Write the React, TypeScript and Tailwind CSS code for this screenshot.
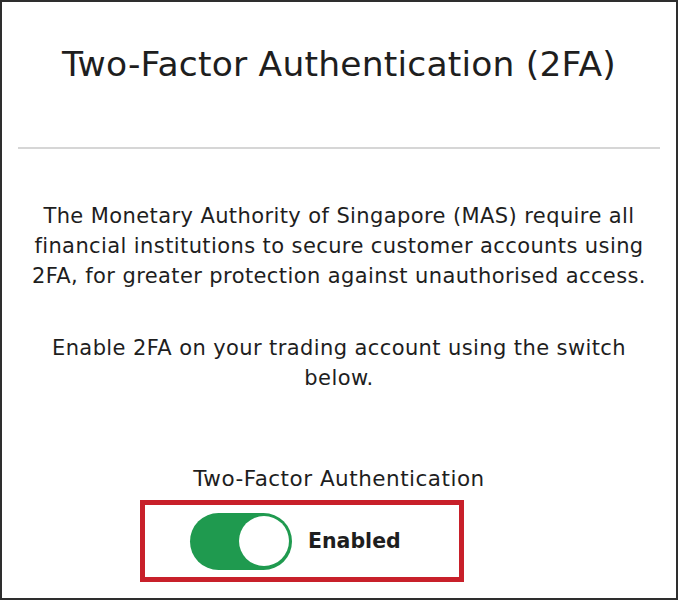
import React from "react";

export default function App() {
  return (
    <div className="w-[678px] h-[600px] bg-white border-2 border-[#2e2e2e] flex flex-col items-center text-[#1e1e1e]" style={{ fontFamily: '"DejaVu Sans", sans-serif' }}>
      <h1 className="mt-[40px] text-[34.5px] leading-[44px] tracking-[0.2px] font-normal">Two-Factor Authentication (2FA)</h1>
      <div className="mt-[61px] w-[642px] h-[2px] bg-[#d6d6d6]" />
      <p className="mt-[52px] text-center text-[21px] leading-[30px] tracking-[0.4px]">
        The Monetary Authority of Singapore (MAS) require all
        <br />
        financial institutions to secure customer accounts using
        <br />
        2FA, for greater protection against unauthorised access.
      </p>
      <p className="mt-[42px] text-center text-[21px] leading-[30px] tracking-[0.4px]">
        Enable 2FA on your trading account using the switch
        <br />
        below.
      </p>
      <div className="mt-[73px] text-[21.5px] leading-[26px] tracking-[0.5px]">Two-Factor Authentication</div>
      <div className="self-start ml-[138px] mt-[8px] w-[324px] h-[82px] border-[5px] border-[#c8202a] flex items-center pl-[45px] gap-[16px]">
        <div className="w-[102px] h-[57px] rounded-full bg-[#1f9a4f] flex items-center justify-end pr-[3px]">
          <div className="w-[50px] h-[50px] rounded-full bg-white" />
        </div>
        <span className="text-[20.5px] font-bold">Enabled</span>
      </div>
    </div>
  );
}
